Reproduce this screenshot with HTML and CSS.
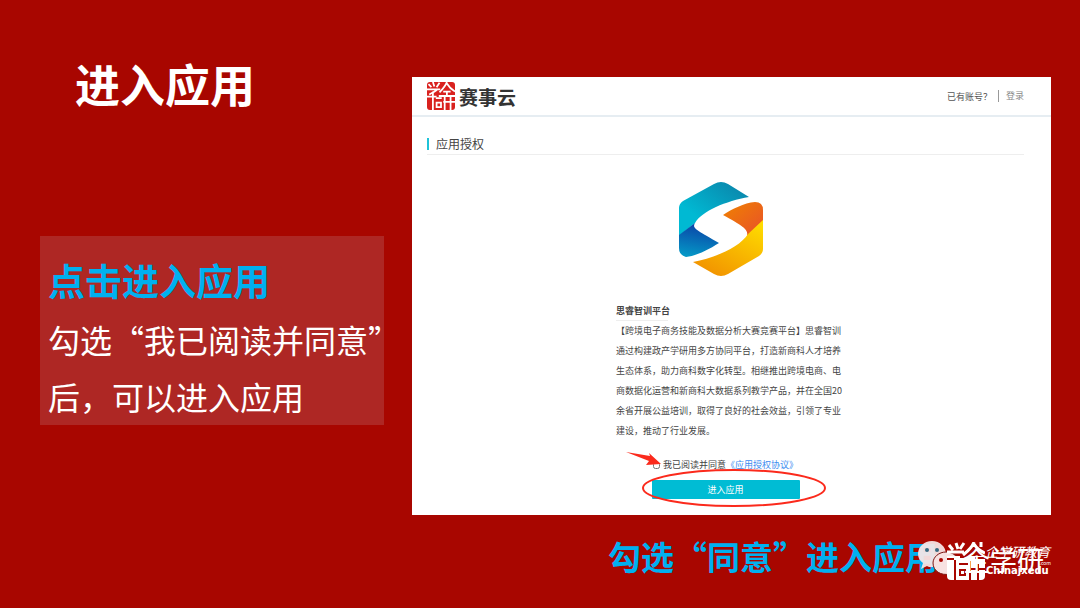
FILE: index.html
```html
<!DOCTYPE html>
<html lang="zh-CN">
<head>
  <meta charset="utf-8">
  <title>进入应用</title>
  <link rel="stylesheet" href="styles.css">
</head>
<body>
  <div class="slide">
    <div class="left">
      <h1>进入应用</h1>
      <div class="tip">
        <h2>点击进入应用</h2>
        <p>勾选“我已阅读并同意”<br>后，可以进入应用</p>
      </div>
    </div>

    <div class="right">
      <div class="panel">
        <div class="header">
          <svg class="seal" viewBox="0 0 38 38">
            <rect width="38" height="38" rx="4" fill="#d9211e"/>
            <g fill="none" stroke="#fff" stroke-width="2.4">
              <path d="M2 3l4 4M8 0l2 6M17 1l-4 6M0 10h18M3 17c4-2 8-4 11-7M8 13v25M0 20h13"/>
              <path d="M27 0c-2 6-6 10-10 14M27 2c3 5 6 8 11 11M22 13h10M27 12v7M16 19h22"/>
              <path d="M12 22h8M13 28h6v6h-6zM24 19v19M32 19v19M22 27h16"/>
            </g>
          </svg>
          <span class="brand">赛事云</span>
          <span class="account">已有账号？</span>
          <a class="login" href="#">登录</a>
        </div>

        <h3 class="bar">应用授权</h3>

        <form class="auth">
          <svg class="logo" viewBox="0 0 86 94">
            <defs>
              <linearGradient id="blue" x1="0" y1="1" x2="1" y2="0">
                <stop offset="0.3" stop-color="#00b9d3"/>
                <stop offset="1" stop-color="#0c7fa6"/>
              </linearGradient>
              <linearGradient id="navy" x1="0.6" y1="0" x2="0.4" y2="1">
                <stop offset="0" stop-color="#0b3fa5"/>
                <stop offset="1" stop-color="#0497c6"/>
              </linearGradient>
              <linearGradient id="orange" x1="0" y1="0" x2="1" y2="1">
                <stop offset="0" stop-color="#f08200"/>
                <stop offset="1" stop-color="#e8502a"/>
              </linearGradient>
              <linearGradient id="yellow" x1="1" y1="0" x2="0.3" y2="1">
                <stop offset="0" stop-color="#ffe000"/>
                <stop offset="1" stop-color="#f29400"/>
              </linearGradient>
            </defs>
            <path fill="url(#blue)" d="M1 54V26q0-4 4-7L36 2q7-4 14 0l21 13C48 19 24 29 17 41z"/>
            <path fill="url(#navy)" d="M17 41c-3 5 0 6 24 20C30 68 18 74 8 75q-7-2-7-9V53z"/>
            <path fill="url(#orange)" d="M45 33c9-6 21-12 32-13q8 0 8 8v12L69 54c2-7-6-11-24-21z"/>
            <path fill="url(#yellow)" d="M85 38v29q0 4-4 7L50 92q-7 4-14 0L15 80c22-4 47-15 55-28z"/>
          </svg>
          <div class="info">
            <h4>思睿智训平台</h4>
            <p>【跨境电子商务技能及数据分析大赛竞赛平台】思睿智训<br>
              通过构建政产学研用多方协同平台，打造新商科人才培养<br>
              生态体系，助力商科数字化转型。相继推出跨境电商、电<br>
              商数据化运营和新商科大数据系列教学产品，并在全国20<br>
              余省开展公益培训，取得了良好的社会效益，引领了专业<br>
              建设，推动了行业发展。</p>
          </div>
          <div class="agree">
            <input type="checkbox" id="agree">
            <label for="agree">我已阅读并同意</label><a href="#">《应用授权协议》</a>
          </div>
          <div class="submit">
            <button type="button">进入应用</button>
            <svg class="mark" viewBox="0 0 200 58">
              <path fill="#fb2a1c" d="M0 2l24 4-1-3 12 11-15 1 3-4z"/>
              <ellipse cx="108" cy="38" rx="91" ry="18" fill="none" stroke="#fb2a1c" stroke-width="2"/>
            </svg>
          </div>
        </form>
      </div>
      <h2 class="caption">勾选“同意”进入应用</h2>
    </div>

    <div class="watermark">
      <svg class="wechat" viewBox="0 0 46 38">
        <path fill="#f7e6e6" fill-opacity="0.94" d="M15 1c8 0 14 6 14 13s-6 13-14 13c-2 0-4 0-5-1l-6 3 2-6c-3-2-5-5-5-9C1 7 7 1 15 1z"/>
        <circle cx="10" cy="10" r="2" fill="#356a82"/>
        <circle cx="20" cy="10" r="2" fill="#356a82"/>
        <path fill="#f7e1e1" stroke="#7d1512" d="M29 12c7 0 13 5 13 11 0 4-2 7-5 9l1 4-5-2c-9 2-17-3-17-11 0-6 6-11 13-11z"/>
        <circle cx="24" cy="20" r="2" fill="#a80600"/>
        <circle cx="34" cy="20" r="2" fill="#a80600"/>
      </svg>
      <svg class="stamp" viewBox="0 0 38 38">
        <path fill="#fff" d="M0 14h38v20q0 4-4 4H4q-4 0-4-4z"/>
        <g fill="none" stroke="#fff" stroke-width="3">
          <path d="M2 3l4 5M9 1l2 6M17 1l-4 6M0 10h17M27 0c-2 6-6 9-11 13M27 2c3 5 6 7 11 9M34 0v5"/>
        </g>
        <g fill="none" stroke="#a80600" stroke-width="2">
          <path d="M0 17h7M8 18v20M13 15h8M12 22h9M13 28h5v5h-5zM23 19v19M31 20v18M23 27h15M28 16h10"/>
        </g>
      </svg>
      <span class="account-name">企学研</span>
      <span class="edu">企学研教育</span>
      <span class="com">.com</span>
      <span class="site">Chinajxedu</span>
    </div>
  </div>
</body>
</html>
```
FILE: styles.css
```css
body {
  margin: 0;
  background-color: #a80600;
  font-family: "Noto Sans CJK SC", sans-serif;
}
h1, h2, h3, h4, p {
  margin: 0;
}
a {
  text-decoration: none;
}
.slide {
  position: relative;
  display: grid;
  grid-template-columns: minmax(0, 344fr) minmax(0, 639fr);
  gap: 28px;
  align-items: start;
  box-sizing: border-box;
  min-height: 100vh;
  padding: 56px 29px 0 40px;
}
h1 {
  padding-left: 35px;
  color: #fff;
  font-size: 45px;
  line-height: 56px;
}
.tip {
  margin-top: 124px;
  padding: 16px 0 0 8px;
  background-color: #ae2724;
  color: #fff;
  white-space: nowrap;
}
.tip h2 {
  margin-bottom: 2px;
  color: #00b0f0;
  font-size: 37px;
  line-height: 57px;
}
.tip p {
  font-size: 32px;
  line-height: 57px;
}

/* white window */
.panel {
  margin-top: 21px;
  padding-bottom: 16px;
  background-color: #fff;
  color: #444;
  font-size: 9px;
}
.header {
  display: flex;
  align-items: center;
  height: 38px;
  padding: 0 27px 0 15px;
  border-bottom: 2px solid #e6edf2;
}
.seal {
  width: 28px;
  height: 28px;
  margin-right: 4px;
}
.brand {
  flex: 1;
  color: #333;
  font-size: 19px;
  font-weight: bold;
}
.account {
  color: #555;
}
.login {
  margin-left: 6px;
  padding-left: 7px;
  border-left: 1px solid #999;
  color: #888;
  line-height: 12px;
}
.bar {
  display: flex;
  align-items: center;
  margin: 17px 27px 0 15px;
  border-bottom: 1px solid #eee;
  font-size: 12px;
  font-weight: normal;
  line-height: 20px;
}
.bar::before {
  content: "";
  width: 2px;
  height: 12px;
  margin-right: 7px;
  background-color: #1fc3d8;
}
.auth {
  display: flex;
  flex-direction: column;
  align-items: center;
  margin: 0 27px 0 15px;
}
.logo {
  width: 86px;
  height: 94px;
  margin: 27px 10px 25px 0;
}
.info {
  width: 219px;
  line-height: 20px;
  white-space: nowrap;
}
.info h4 {
  width: 52px;
  border-bottom: 1px solid #eee;
  font-size: 9px;
  line-height: 19px;
}
.agree {
  display: flex;
  align-items: center;
  margin-top: 14px;
  line-height: 20px;
}
.agree input {
  width: 7px;
  height: 7px;
  margin: 0 3px 0 0;
}
.agree a {
  color: #3b8cf0;
}
.submit {
  position: relative;
}
.submit button {
  display: block;
  width: 148px;
  height: 19px;
  margin-top: 5px;
  padding: 0;
  border: none;
  border-radius: 1px;
  background-color: #00bcd4;
  color: #fff;
  font-family: inherit;
  font-size: 9px;
}
.mark {
  position: absolute;
  left: -26px;
  bottom: -9px;
  width: 200px;
  height: 58px;
  overflow: visible;
  pointer-events: none;
}
.caption {
  margin-top: 17px;
  padding-left: 196px;
  color: #00b0f0;
  font-size: 33px;
  line-height: 48px;
  white-space: nowrap;
}

/* account watermark in the corner */
.watermark {
  position: absolute;
  right: 29px;
  bottom: 26px;
  width: 134px;
  height: 42px;
  color: #fff;
  line-height: 1;
}
.watermark > * {
  position: absolute;
}
.wechat {
  left: 0;
  top: 0;
  width: 46px;
  height: 38px;
}
.account-name {
  left: 46px;
  top: 6px;
  font-size: 27px;
}
.stamp {
  left: 30px;
  top: 2px;
  width: 38px;
  height: 38px;
}
.edu {
  right: 1px;
  top: 5px;
  font-size: 13px;
  font-style: italic;
}
.com {
  right: 0;
  top: 20px;
  font-size: 5px;
}
.site {
  left: 69px;
  top: 26px;
  font-family: "DejaVu Sans", sans-serif;
  font-size: 10px;
  font-weight: bold;
}
```
